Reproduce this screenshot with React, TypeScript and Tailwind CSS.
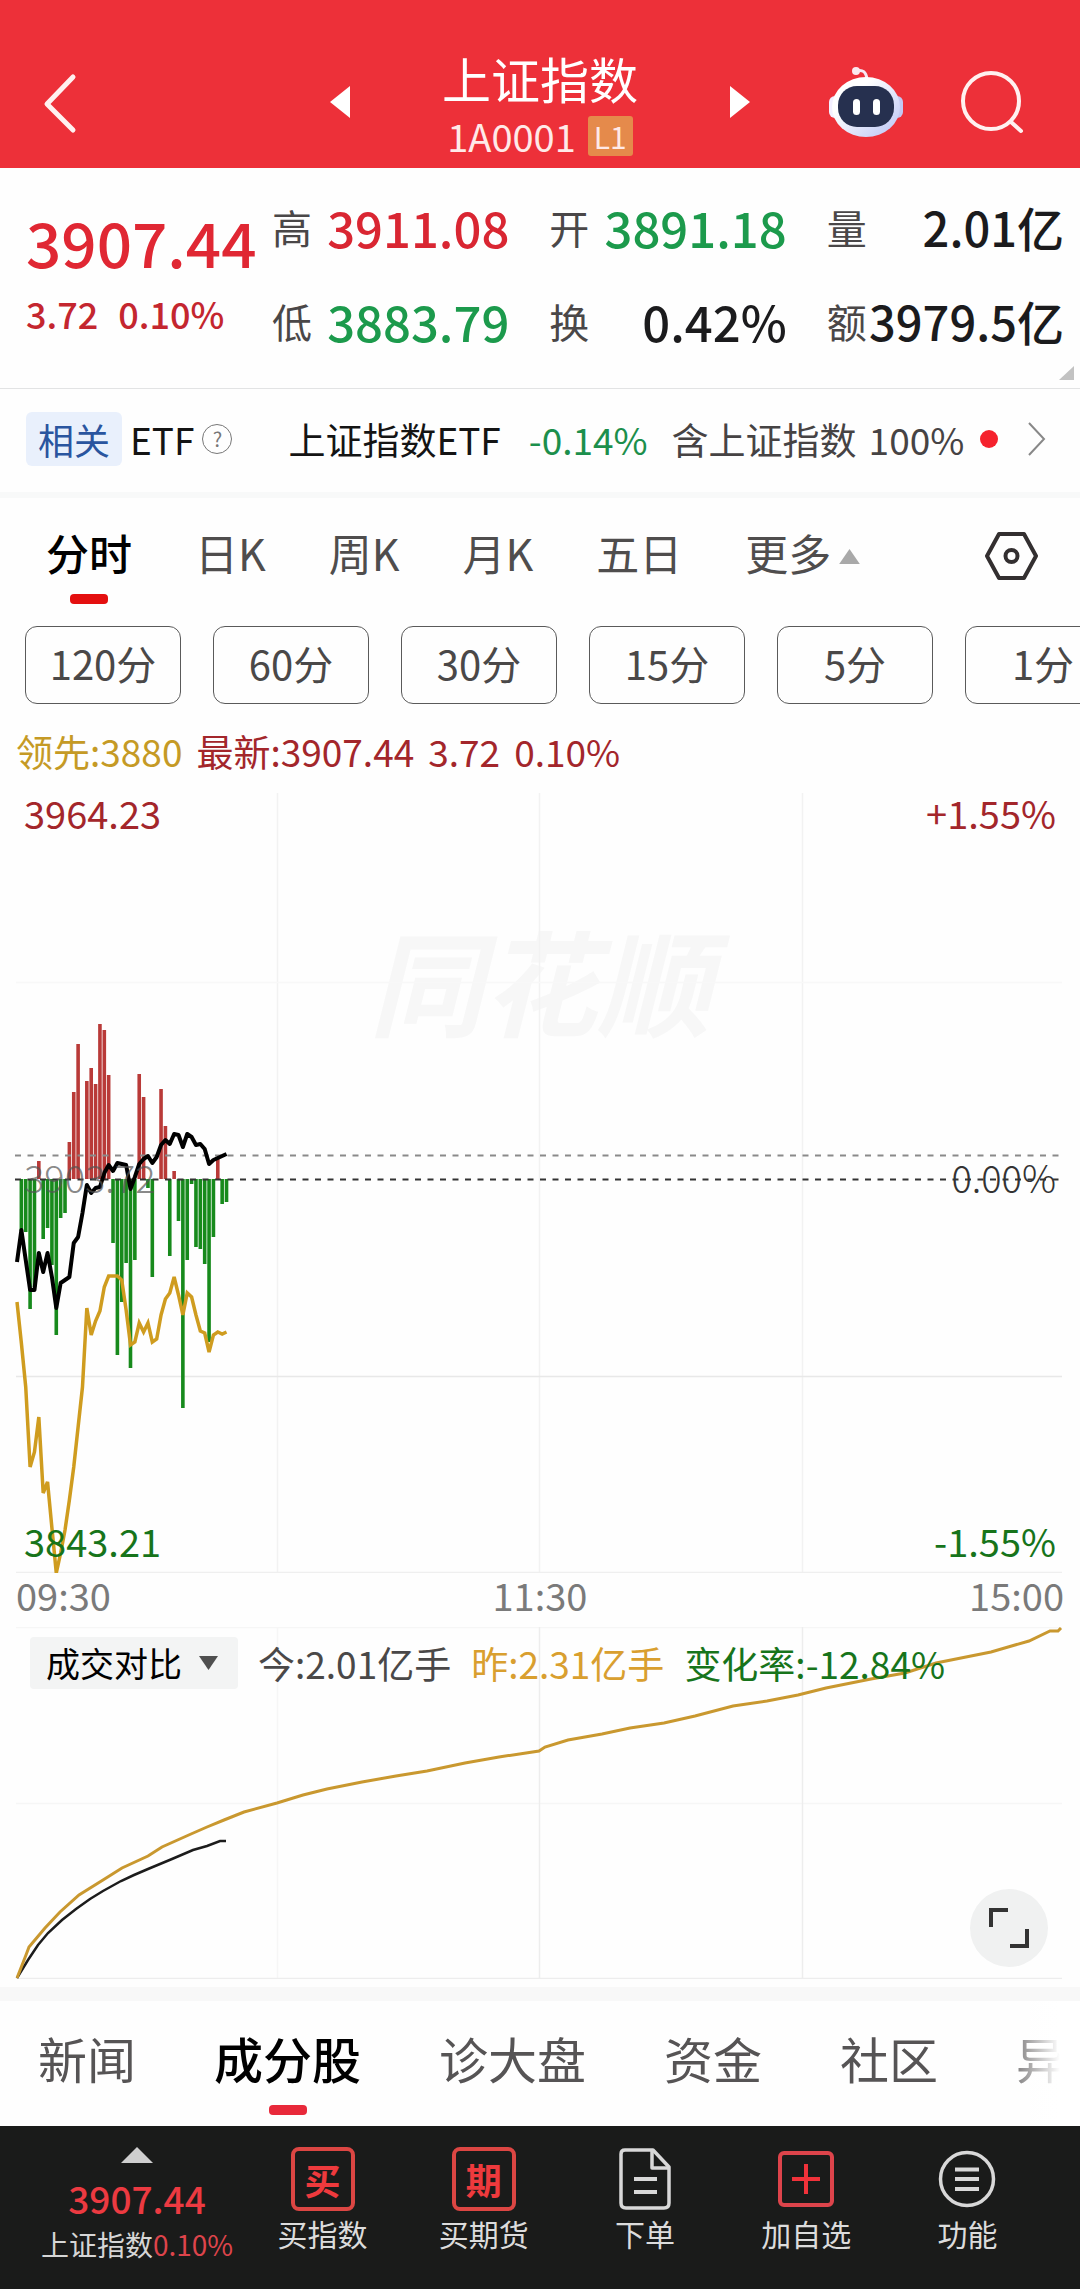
import { useState } from 'react';
import clsx from 'clsx';

const UP = 'text-[#d92632]';
const DOWN = 'text-[#1c9a4c]';
const FLAT = 'text-[#1b1b1d]';

const quotes = [
  { label: '高', value: '3911.08', className: UP },
  { label: '开', value: '3891.18', className: DOWN },
  { label: '量', value: '2.01亿', className: FLAT },
  { label: '低', value: '3883.79', className: DOWN },
  { label: '换', value: '0.42%', className: FLAT },
  { label: '额', value: '3979.5亿', className: FLAT },
];

const periods = ['分时', '日K', '周K', '月K', '五日', '更多'];
const minutes = ['120分', '60分', '30分', '15分', '5分', '1分'];
const sections = ['新闻', '成分股', '诊大盘', '资金', '社区', '异动'];

// One entry per minute since 09:30, measured from the previous close (up is positive)
const bars = [
  0, -52, -53, -130, -108, 18, -60, -49, -86, -156, -39, -34, 37, 87, 135, 0, 98, 111, 95, 155, 149, 104, -64, -176,
  -123, -84, -189, -81, 105, 82, -9, -98, 0, 90, 53, -77, 8, -42, -229, -81, -5, -68, -70, -85, -163, -58, 20, -25, -23,
];
const price = [
  -83, -51, -81, -111, -111, -74, -93, -74, -98, -129, -104, -101, -98, -64, -58, -34, -6, -14, -9, -8, 6, 14, 8, 16,
  15, 14, -10, 2, 15, 20, 23, 16, 22, 34, 39, 35, 45, 44, 32, 45, 42, 34, 35, 30, 15, 19, 21, 23, 25,
];
const leading = [
  -123, -164, -208, -288, -273, -238, -314, -303, -349, -394, -374, -351, -321, -288, -248, -208, -129, -156, -142,
  -132, -108, -97, -97, -97, -101, -131, -166, -163, -144, -153, -144, -163, -160, -136, -120, -114, -98, -116, -136,
  -114, -118, -136, -152, -154, -173, -156, -153, -155, -153,
];

const yesterdayVolume =
  '17,351 26,328 29,320 45,301 60,285 79,268 103,253 122,241 148,229 162,220 191,207 207,200 224,193 244,185 277,176 303,168 327,162 362,155 396,149 427,144 465,136 499,130 539,124 545,120 568,113 602,107 630,101 664,96 695,89 733,79 767,74 798,68 826,61 871,52 905,46 936,36 991,25 1029,14 1050,4 1058,4 1061,1';
const todayVolume =
  '17,351 28,333 38,318 48,306 62,293 76,282 90,272 103,264 121,254 134,248 148,242 172,232 193,223 207,219 220,214 226,214';

const ZERO = 394;
const minuteX = (i: number) => 17 + i * 4.365;
const toPoints = (values: number[]) => values.map((v, i) => `${minuteX(i)},${ZERO - v}`).join(' ');

function Header() {
  return (
    <header className="grid grid-cols-[1fr_auto_1fr] items-center bg-[#ed3039] pt-12 pb-3 text-white">
      <div className="pl-10">
        <button type="button" aria-label="返回" className="block">
          <svg width="40" height="64" viewBox="0 0 40 64" fill="none" stroke="#fff1f0" strokeWidth="5" strokeLinecap="round" strokeLinejoin="round">
            <path d="M33 7 L7 34 L33 60" />
          </svg>
        </button>
      </div>
      <div className="flex items-center gap-[92px]">
        <button type="button" aria-label="上一个">
          <svg width="20" height="32" viewBox="0 0 20 32" fill="currentColor">
            <path d="M20 0 V32 L0 16 Z" />
          </svg>
        </button>
        <div className="flex flex-col items-center gap-2">
          <h1 className="text-[49px] leading-[60px] font-normal">上证指数</h1>
          <div className="flex items-center gap-3 text-[38px] leading-10 text-[#ffe9e8]">
            <span>1A0001</span>
            <span className="rounded-[3px] bg-[#e58a4b] px-1.5 text-[30px] leading-10">L1</span>
          </div>
        </div>
        <button type="button" aria-label="下一个">
          <svg width="20" height="32" viewBox="0 0 20 32" fill="currentColor">
            <path d="M0 0 V32 L20 16 Z" />
          </svg>
        </button>
      </div>
      <div className="flex items-center justify-end gap-14 pr-14">
        <button type="button" aria-label="智能助手">
          <svg width="76" height="72" viewBox="0 0 76 72">
            <defs>
              <linearGradient id="head" x1="0" y1="0" x2="1" y2="1">
                <stop offset="0.3" stopColor="#ffffff" />
                <stop offset="1" stopColor="#b9c3f5" />
              </linearGradient>
            </defs>
            <path d="M28 5 C35 3 38 6 39 13" fill="none" stroke="#f6e9f4" strokeWidth="3" />
            <circle cx="28" cy="5" r="4" fill="#fbe9ee" />
            <rect x="1" y="30" width="12" height="22" rx="6" fill="#f3efff" />
            <rect x="63" y="30" width="12" height="22" rx="6" fill="#c3c8f2" />
            <ellipse cx="38" cy="41" rx="34" ry="30" fill="url(#head)" />
            <rect x="10" y="20" width="56" height="41" rx="19" fill="#26304f" />
            <rect x="25" y="33" width="7" height="16" rx="3.5" fill="#fff" />
            <rect x="45" y="33" width="7" height="16" rx="3.5" fill="#fff" />
          </svg>
        </button>
        <button type="button" aria-label="搜索">
          <svg width="64" height="64" viewBox="0 0 64 64" fill="none" stroke="#fff1f0" strokeWidth="4" strokeLinecap="round">
            <circle cx="31" cy="31" r="28" />
            <path d="M51 52 L61 61" />
          </svg>
        </button>
      </div>
    </header>
  );
}

function QuotePanel() {
  return (
    <section className="relative flex border-b border-[#e2e3e4] pt-[31px] pr-4 pb-[39px] pl-[26px]">
      <div className="w-[246px] shrink-0 pt-2.5 font-medium text-[#e02733]">
        <div className="text-[62px] leading-[64px]">3907.44</div>
        <div className="mt-5 flex gap-5 text-4xl leading-10 text-[#c4262f]">
          <span>3.72</span>
          <span>0.10%</span>
        </div>
      </div>
      <dl className="grid flex-1 grid-cols-3 gap-x-10 gap-y-[38px]">
        {quotes.map((quote) => (
          <div key={quote.label} className="flex items-center justify-between leading-[56px]">
            <dt className="text-[40px] text-[#4a4748]">{quote.label}</dt>
            <dd
              className={clsx(
                'font-medium whitespace-nowrap',
                quote.value.endsWith('亿') ? 'text-[47px]' : 'text-[49px]',
                quote.className,
              )}
            >
              {quote.value}
            </dd>
          </div>
        ))}
      </dl>
      <svg className="absolute right-1.5 bottom-2" width="15" height="14" viewBox="0 0 15 14" fill="#c2c2c2">
        <path d="M15 0 V14 H0 Z" />
      </svg>
    </section>
  );
}

function EtfRow() {
  return (
    <a href="#etf" className="flex items-center border-b-6 border-[#f8f9f9] pt-[23px] pr-[34px] pb-[26px] pl-[26px] text-[37px] leading-[54px] whitespace-nowrap text-[#141414]">
      <span className="rounded-md bg-[#e9f0fc] px-3 text-4xl leading-[54px] text-[#2a559f]">相关</span>
      <span className="ml-2 text-[37px]">ETF</span>
      <span className="ml-2 flex size-[30px] items-center justify-center rounded-full border border-[#777] text-xl leading-none text-[#777]">?</span>
      <span className="ml-14">上证指数ETF</span>
      <span className="ml-7 text-[#1c8f4c]">-0.14%</span>
      <span className="ml-6 text-[#464344]">含上证指数</span>
      <span className="ml-3 text-[#464344]">100%</span>
      <span className="ml-4 size-[18px] rounded-full bg-[#f5222d]" />
      <svg className="ml-auto" width="18" height="34" viewBox="0 0 18 34" fill="none" stroke="#888" strokeWidth="2">
        <path d="M1 1 L16 17 L1 33" />
      </svg>
    </a>
  );
}

function PeriodTabs() {
  const [active, setActive] = useState('分时');

  return (
    <>
      <nav className="flex items-start pt-[22px] pr-[42px] pl-[46px]">
        <div className="flex gap-[63px]">
          {periods.map((period) => (
            <button
              key={period}
              type="button"
              onClick={() => setActive(period)}
              className={clsx('flex flex-col items-center text-[43px] leading-[64px]', period === active ? 'font-medium text-black' : 'text-[#4f4d4d]')}
            >
              <span className="flex items-center gap-2">
                {period}
                {period === '更多' && (
                  <svg className="mt-2" width="21" height="15" viewBox="0 0 22 16" fill="#a9a9a9">
                    <path d="M11 0 L22 16 H0 Z" />
                  </svg>
                )}
              </span>
              <span className={clsx('mt-2.5 h-2.5 w-[38px] rounded', period === active && 'bg-[#e40f0f]')} />
            </button>
          ))}
        </div>
        <button type="button" aria-label="设置" className="mt-3 ml-auto">
          <svg width="53" height="48" viewBox="0 0 53 48" fill="none" stroke="#332f30" strokeWidth="4" strokeLinejoin="round">
            <path d="M14 2 H39 L51 24 L39 46 H14 L2 24 Z" />
            <circle cx="26.5" cy="24" r="6" />
          </svg>
        </button>
      </nav>
      <div className="mt-[22px] flex gap-8 overflow-hidden pl-[25px]">
        {minutes.map((minute) => (
          <button key={minute} type="button" className="h-[78px] w-[156px] shrink-0 rounded-xl border border-[#5a5a5a] pb-1 text-[40px] text-[#4a4848]">
            {minute}
          </button>
        ))}
      </div>
    </>
  );
}

function PriceChart() {
  return (
    <section className="text-[38px] leading-10">
      <div className="mt-[27px] mb-3.5 flex gap-3.5 px-4 text-[37px] leading-10 text-[#a3262b]">
        <span className="text-[#c59a25]">领先:3880</span>
        <span>最新:3907.44</span>
        <span>3.72</span>
        <span>0.10%</span>
      </div>
      <div className="relative">
        <span className="absolute inset-x-0 top-[124px] text-center text-[114px] leading-[140px] font-bold text-[#f7f7f7] italic">同花顺</span>
        <svg className="relative block h-[788px] w-full" viewBox="0 0 1080 788" preserveAspectRatio="none" fill="none">
          <g stroke="#efefef" strokeWidth="1.5">
            <path d="M277.5 8 V788 M539.5 8 V788 M802.5 8 V788" stroke="#f2f2f2" />
            <path d="M16 197.5 H1062" stroke="#f8f8f8" />
            <path d="M16 591.5 H1062" stroke="#e8e8e8" />
            <path d="M16 787.5 H1062" />
          </g>
          {bars.map((bar, i) => (
            <rect
              key={i}
              x={minuteX(i) - 1.8}
              y={bar > 0 ? ZERO - bar : ZERO}
              width="3.6"
              height={Math.abs(bar)}
              fill={bar > 0 ? '#b93a38' : '#178a1c'}
            />
          ))}
          <path d="M15 370.5 H1062" stroke="#8a8a8a" strokeWidth="2" strokeDasharray="6 6.5" />
          <path d="M15 394.5 H1062" stroke="#333" strokeWidth="2" strokeDasharray="6 6.5" />
          <polyline points={toPoints(leading)} stroke="#cf9c1f" strokeWidth="3.5" />
          <polyline points={toPoints(price)} stroke="#000" strokeWidth="4" strokeLinejoin="round" />
        </svg>
        <span className="absolute top-2 left-6 text-[#a3262b]">3964.23</span>
        <span className="absolute top-2 right-6 text-[#a3262b]">+1.55%</span>
        <span className="absolute top-[372px] left-6 font-light text-[#555]/70">3903.72</span>
        <span className="absolute top-[372px] right-6 font-light text-[#333]">0.00%</span>
        <span className="absolute bottom-3 left-6 text-[#17741b]">3843.21</span>
        <span className="absolute right-6 bottom-3 text-[#17741b]">-1.55%</span>
      </div>
      <div className="mt-0.5 flex justify-between px-4 text-[#7a7a7a]">
        <span>09:30</span>
        <span>11:30</span>
        <span>15:00</span>
      </div>
    </section>
  );
}

function VolumeChart() {
  return (
    <section className="relative mt-3 pb-2">
      <svg className="block h-[352px] w-full" viewBox="0 0 1080 352" preserveAspectRatio="none" fill="none">
        <path d="M16 0.5 H1062 M277.5 0 V352 M16 176.5 H1062" stroke="#f6f6f6" strokeWidth="1.5" />
        <path d="M16 351.5 H1062 M539.5 0 V352 M802.5 0 V352" stroke="#ededed" strokeWidth="1.5" />
        <polyline points={todayVolume} stroke="#1c1c1c" strokeWidth="2.5" />
        <polyline points={yesterdayVolume} stroke="#c9982f" strokeWidth="3" />
      </svg>
      <div className="absolute inset-x-0 top-2.5 flex items-center gap-5 pl-[30px] text-[37px] leading-[50px] whitespace-nowrap">
        <div className="relative text-[34px]">
          <select aria-label="指标" className="block h-[52px] w-[208px] appearance-none rounded-sm bg-[#f3f4f4] pl-4 leading-[50px] text-black">
            <option>成交对比</option>
            <option>成交量</option>
          </select>
          <svg className="pointer-events-none absolute top-[19px] right-5" width="19" height="14" viewBox="0 0 19 14" fill="#4f4f4f">
            <path d="M0 0 H19 L9.5 14 Z" />
          </svg>
        </div>
        <span className="text-[#4a4848]">今:2.01亿手</span>
        <span className="text-[#d99f2f]">昨:2.31亿手</span>
        <span className="text-[#17741b]">变化率:-12.84%</span>
      </div>
      <button type="button" aria-label="全屏" className="absolute right-8 bottom-5 flex size-[78px] items-center justify-center rounded-full bg-[#f0f1f1]">
        <svg width="40" height="40" viewBox="0 0 40 40" fill="none" stroke="#333" strokeWidth="4">
          <path d="M2 19 V2 H19 M38 21 V38 H21" />
        </svg>
      </button>
    </section>
  );
}

function SectionTabs() {
  const [active, setActive] = useState('成分股');

  return (
    <nav className="relative flex gap-[78px] overflow-hidden border-t-14 border-[#f8f8f8] pt-[25px] pb-[11px] pl-[38px]">
      {sections.map((section) => (
        <button
          key={section}
          type="button"
          onClick={() => setActive(section)}
          className={clsx('flex shrink-0 flex-col items-center text-[49px] leading-[64px]', section === active ? 'font-medium text-black' : 'text-[#565455]')}
        >
          {section}
          <span className={clsx('mt-[15px] h-2.5 w-[38px] rounded', section === active && 'bg-[#e8293a]')} />
        </button>
      ))}
      <div className="pointer-events-none absolute inset-y-0 right-0 w-20 bg-gradient-to-r from-transparent to-white to-75%" />
    </nav>
  );
}

function BoxedGlyph({ children }: { children: string }) {
  return (
    <span className="flex size-16 items-center justify-center rounded-lg border-4 border-[#dc4643] text-4xl leading-none font-bold text-[#ee3a3d]">
      {children}
    </span>
  );
}

const actions = [
  { label: '买指数', icon: <BoxedGlyph>买</BoxedGlyph> },
  { label: '买期货', icon: <BoxedGlyph>期</BoxedGlyph> },
  {
    label: '下单',
    icon: (
      <svg width="52" height="62" viewBox="0 0 52 62" fill="none" stroke="#d8d8d8" strokeWidth="3.5" strokeLinejoin="round">
        <path d="M6 2 H34 L50 19 V55 Q50 60 45 60 H7 Q2 60 2 55 V6 Q2 2 6 2 Z" />
        <path d="M33 3 V20 H49" />
        <path d="M15 31 H38 M15 44 H38" strokeWidth="4" />
      </svg>
    ),
  },
  {
    label: '加自选',
    icon: (
      <svg width="56" height="56" viewBox="0 0 56 56" fill="none" stroke="#dd444b" strokeWidth="4">
        <rect x="2" y="2" width="52" height="52" rx="4" />
        <path d="M14 28 H42 M28 13 V43" stroke="#f0323a" />
      </svg>
    ),
  },
  {
    label: '功能',
    icon: (
      <svg width="58" height="58" viewBox="0 0 58 58" fill="none" stroke="#d8d8d8" strokeWidth="3.5">
        <circle cx="29" cy="29" r="26.5" />
        <path d="M17 19.5 H41 M17 29 H41 M17 39 H41" strokeWidth="4" />
      </svg>
    ),
  },
];

function BottomBar() {
  return (
    <footer className="flex bg-[#1a1b1a] px-8 pt-[21px] pb-[29px] whitespace-nowrap">
      <button type="button" className="flex w-[210px] flex-col items-center">
        <svg width="32" height="16" viewBox="0 0 32 16" fill="#cfcfcf">
          <path d="M16 0 L32 16 H0 Z" />
        </svg>
        <span className="mt-[15px] text-[37px] leading-10 font-medium text-[#ec3a41]">3907.44</span>
        <span className="mt-2.5 text-[28px] leading-8 text-[#d6d6d6]">
          上证指数<span className="text-[#dd444b]">0.10%</span>
        </span>
      </button>
      {actions.map((action) => (
        <button key={action.label} type="button" className="flex flex-1 flex-col items-center gap-1 text-3xl leading-9 text-[#dcdcdc]">
          <span className="flex h-16 items-center">{action.icon}</span>
          <span className="leading-9">{action.label}</span>
        </button>
      ))}
    </footer>
  );
}

export default function App() {
  return (
    <div className="overflow-hidden bg-[#fefefe] font-['Noto_Sans_CJK_SC',sans-serif]">
      <Header />
      <main>
        <QuotePanel />
        <EtfRow />
        <PeriodTabs />
        <PriceChart />
        <VolumeChart />
        <SectionTabs />
      </main>
      <BottomBar />
    </div>
  );
}
